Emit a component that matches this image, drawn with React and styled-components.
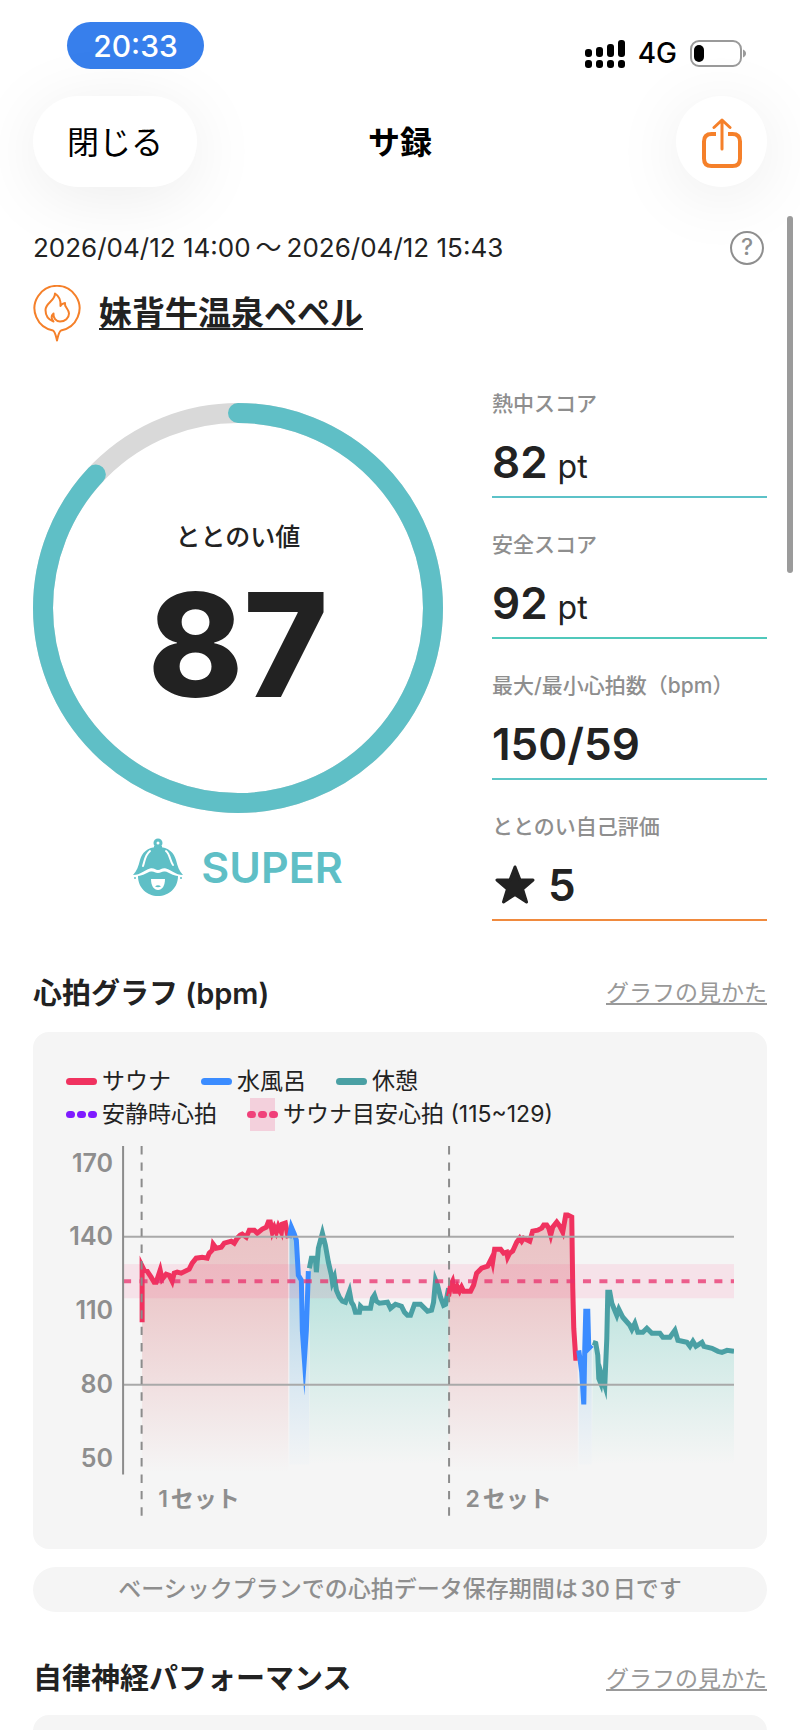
import React from "react";
import styled, { createGlobalStyle } from "styled-components";

const metrics = [
    { label: "熱中スコア", value: "82", unit: "pt", color: "#5cc2c8" },
    { label: "安全スコア", value: "92", unit: "pt", color: "#50c8bb" },
    { label: "最大/最小心拍数（bpm）", value: "150/59", color: "#5cc6c6" },
    { label: "ととのい自己評価", value: "5", star: true, color: "#f08a3e" },
];

const yLabels = [
    { text: "170", y: 32 },
    { text: "140", y: 105 },
    { text: "110", y: 179 },
    { text: "80", y: 253 },
    { text: "50", y: 327 },
];

// 心拍の折れ線 (x,y)
const sauna1 = "76,182 76,126 78,130 81,131 85,137 88,142 90,142 94,130 96,139 100,134 103,135 106,141 108,133 111,132 115,133 123,129 126,123 130,118 136,117 141,118 143,113 146,110 147,104 150,108 155,107 158,103 165,101 168,103 171,98 174,95 176,94 180,97 183,90 188,90 191,93 196,89 200,87 202,82 204,82 206,92 208,87 210,92 212,86 215,92 216,84 219,83 222,98";
const water1 = "223,98 225,87 228,94 230,100 232,135 235,140 236,190 238,219 240,190 242,131";
const rest1 = "243,128 245,118 249,118 250,132 252,108 256,93 259,105 262,122 265,135 266,142 268,137 270,150 273,157 276,161 279,162 283,151 285,162 287,165 289,172 293,172 294,166 296,168 304,168 306,158 308,155 310,161 313,163 321,162 324,168 329,164 335,166 338,172 341,175 344,175 348,164 354,164 358,168 361,171 365,170 367,162 369,140 371,145 374,157 377,165 379,164 382,148";
const sauna2 = "382,156 384,145 386,141 388,151 390,151 391,147 393,151 395,147 397,151 404,151 407,145 410,133 415,128 421,126 425,118 426,122 428,109 434,109 437,113 440,112 441,117 443,113 446,111 450,102 453,98 455,101 457,98 463,101 466,91 471,90 475,88 477,85 480,85 482,88 484,95 486,87 490,82 493,86 496,92 499,75 501,75 505,77 506,148 507,188 509,218 511,218";
const water2 = "512,210 515,232 517,264 518,208 519,171 521,171 522,208 525,205";
const rest2 = "526,202 529,203 531,215 532,238 534,243 535,235 538,245 540,198 541,152 543,152 545,163 550,175 552,169 556,177 563,185 565,189 568,183 571,192 576,192 580,188 585,193 593,193 596,197 603,197 608,190 611,200 620,202 623,206 626,201 629,206 635,202 637,206 645,208 651,211 655,212 660,210 667,211";

const series = [
    { id: "sauna", points: sauna1, from: 76, to: 222, bottom: 332, color: "#f0325f" },
    { id: "rest", points: rest1, from: 243, to: 382, bottom: 324, color: "#4aa0a4" },
    { id: "water", points: water1, from: 223, to: 243, bottom: 324, color: "#3b8cff" },
    { id: "sauna", points: sauna2, from: 382, to: 511, bottom: 332, color: "#f0325f" },
    { id: "rest", points: rest2, from: 525, to: 667, bottom: 324, color: "#4aa0a4" },
    { id: "water", points: water2, from: 512, to: 525, bottom: 324, color: "#3b8cff" },
];

const HeartChart = () => (
    <Chart viewBox="0 0 667 380" role="img" aria-label="心拍グラフ">
        <defs>
            <linearGradient id="sauna" gradientUnits="userSpaceOnUse" x1="0" y1="70" x2="0" y2="332">
                <stop offset="0" stopColor="#cf4048" stopOpacity="0.29" />
                <stop offset="0.35" stopColor="#cf4048" stopOpacity="0.23" />
                <stop offset="1" stopColor="#cf4048" stopOpacity="0" />
            </linearGradient>
            <linearGradient id="water" gradientUnits="userSpaceOnUse" x1="0" y1="88" x2="0" y2="324">
                <stop offset="0" stopColor="#4899c2" stopOpacity="0.5" />
                <stop offset="1" stopColor="#6cb8f0" stopOpacity="0.02" />
            </linearGradient>
            <linearGradient id="rest" gradientUnits="userSpaceOnUse" x1="0" y1="94" x2="0" y2="324">
                <stop offset="0" stopColor="#48bdb0" stopOpacity="0.44" />
                <stop offset="1" stopColor="#55c8b4" stopOpacity="0" />
            </linearGradient>
        </defs>

        {series.map((s, i) => (
            <polygon
                key={i}
                points={`${s.from},${s.bottom} ${s.points} ${s.to},${s.bottom}`}
                fill={`url(#${s.id})`}
            />
        ))}

        <rect x="57" y="124" width="610" height="34" fill="#ff3c82" fillOpacity="0.1" />

        {series.map((s, i) => (
            <polyline
                key={i}
                points={s.points}
                fill="none"
                stroke={s.color}
                strokeWidth="5"
                strokeMiterlimit={s.id === "water" ? 20 : 8}
            />
        ))}

        <path d="M57 141H667" stroke="#e8306c" strokeOpacity="0.75" strokeWidth="4" strokeDasharray="8 8.4" />
        <path d="M57 96.5H667M57 244.5H667" stroke="#a9a9a9" strokeWidth="2" />
        <path d="M57 6V334" stroke="#8c8c8c" strokeWidth="2" />
        <path d="M75.500 6V376M382.500 6V376" stroke="#8c8c8c" strokeWidth="2" strokeDasharray="8.400 8" />

        {yLabels.map((l) => (
            <AxisText key={l.text} x="47" y={l.y} textAnchor="end">{l.text}</AxisText>
        ))}
        <SetText x="92" y="366">1セット</SetText>
        <SetText x="399" y="366">2セット</SetText>
    </Chart>
);

const App = () => {
    return (
        <>
            <GlobalStyle />
            <Screen>
                <StatusBar>
                    <Clock>20:33</Clock>
                    <StatusIcons>
                        <svg width="40" height="28" viewBox="0 0 40 28">
                            <rect x="0" y="9" width="7" height="8" rx="3" />
                            <rect x="11" y="7" width="7" height="10" rx="3" />
                            <rect x="22" y="4" width="7" height="13" rx="3" />
                            <rect x="33" y="0" width="7" height="17" rx="3" />
                            <rect x="0" y="20" width="7" height="8" rx="3" />
                            <rect x="11" y="20" width="7" height="8" rx="3" />
                            <rect x="22" y="20" width="7" height="8" rx="3" />
                            <rect x="33" y="20" width="7" height="8" rx="3" />
                        </svg>
                        <Network>4G</Network>
                        <svg width="57" height="28" viewBox="0 0 57 28">
                            <rect x="1" y="1" width="50" height="25" rx="8" fill="none" stroke="#9a9a9a" strokeWidth="2" />
                            <rect x="4" y="5" width="10" height="17" rx="5" />
                            <path d="M53 9.500c4 1.500 4 6.500 0 8z" fill="#9a9a9a" />
                        </svg>
                    </StatusIcons>
                </StatusBar>

                <Header>
                    <Close type="button">閉じる</Close>
                    <Title>サ録</Title>
                    <Share type="button" aria-label="共有">
                        <svg width="40" height="50" viewBox="0 0 40 50" fill="none" stroke="#f5802a" strokeWidth="4" strokeLinecap="round" strokeLinejoin="round">
                            <path d="M14 16H9.500Q2 16 2 23.500V40.500Q2 48 9.500 48H30.500Q38 48 38 40.500V23.500Q38 16 30.500 16H26" strokeLinecap="butt" />
                            <path d="M20 31V2M12 9.500L20 2L28 9.500" strokeWidth="3" />
                        </svg>
                    </Share>
                </Header>

                <Content>
                    <DateRow>
                        <Period>
                            <time>2026/04/12 14:00</time>
                            <span>～</span>
                            <time>2026/04/12 15:43</time>
                        </Period>
                        <Help type="button" aria-label="ヘルプ">?</Help>
                    </DateRow>

                    <Facility>
                        <svg width="48" height="57" viewBox="0 0 48 57" fill="none" stroke="#f5802a" strokeWidth="2" strokeLinejoin="round">
                            <path d="M20 45.500A22.500 22.500 0 1 1 28 45.500C25.500 47 25 52 24 55.500C23 52 22.500 47 20 45.500Z" />
                            <path d="M20.500 36.500C15 34.500 12.500 30 12.500 25C12.500 18 22 16 22 8.500C26 11 28 15 27.500 21C28 19 30 18.500 32 18C31 22 36 24 36 28.500C36 33 32 36.500 27 36.500C23 36.500 20 33 20.500 28.500C18 30.500 18 34 20.500 36.500Z" />
                        </svg>
                        <FacilityLink href="#facility">妹背牛温泉ペペル</FacilityLink>
                    </Facility>

                    <Summary>
                        <ScoreBind>
                            <Ring>
                                <RingImage viewBox="0 0 410 410" fill="none" strokeWidth="20">
                                    <circle cx="205" cy="205" r="195" stroke="#d9d9d9" />
                                    <circle
                                        cx="205"
                                        cy="205"
                                        r="195"
                                        stroke="#5fbfc6"
                                        strokeLinecap="round"
                                        pathLength="100"
                                        strokeDasharray="87 13"
                                        transform="rotate(-90 205 205)"
                                    />
                                </RingImage>
                                <RingText>
                                    <RingLabel>ととのい値</RingLabel>
                                    <RingScore>87</RingScore>
                                </RingText>
                            </Ring>
                            <Rank>
                                <svg width="50" height="58" viewBox="0 0 50 58">
                                    <circle cx="25" cy="5" r="3" fill="none" stroke="#5fbfc6" strokeWidth="3" />
                                    <path d="M21 8H29V12H21Z" fill="#5fbfc6" />
                                    <path d="M25 9C36 9 41 15 43 22C44.500 28 46 33 50 37C42 37 39 32 33 30.500C29 29.500 28 32 25 32C22 32 21 29.500 17 30.500C11 32 8 37 0 37C4 33 5.500 28 7 22C9 15 14 9 25 9Z" fill="#5fbfc6" />
                                    <path d="M17 13C12 17 12 22 10 28M33 13C37 16 37 23 40 27" fill="none" stroke="#fff" strokeWidth="2" strokeLinecap="round" />
                                    <path d="M5 38C10 38 14 34 18 33.500C21 33 22 35 25 35C28 35 29 33 32 33.500C36 34 40 38 45 38C45 50 36 58 25 58C14 58 5 50 5 38Z" fill="#5fbfc6" />
                                    <circle cx="2" cy="40" r="1" fill="#5fbfc6" />
                                    <circle cx="48" cy="40" r="1" fill="#5fbfc6" />
                                    <path d="M18 41H32C32 48 29 52 25 52C21 52 18 48 18 41Z" fill="#fff" />
                                    <path d="M22 48.500Q25 46 28 48.500Q25 50 22 48.500Z" fill="#5fbfc6" />
                                </svg>
                                <span>SUPER</span>
                            </Rank>
                        </ScoreBind>

                        <MetricList>
                            {metrics.map((m) => (
                                <Metric key={m.label} $color={m.color}>
                                    <MetricLabel>{m.label}</MetricLabel>
                                    <MetricValue>
                                        {m.star && (
                                            <Star viewBox="0 0 40 40">
                                                <path
                                                    d="M20 2L25 15H38L27.500 24L31.500 37L20 29.500L8.500 37L12.500 24L2 15H15Z"
                                                    fill="#222"
                                                    stroke="#222"
                                                    strokeWidth="3"
                                                    strokeLinejoin="round"
                                                />
                                            </Star>
                                        )}
                                        {m.value}
                                        {m.unit && <Unit>{m.unit}</Unit>}
                                    </MetricValue>
                                </Metric>
                            ))}
                        </MetricList>
                    </Summary>

                    <SectionHead $top={51} $bottom={16}>
                        <SectionTitle>心拍グラフ (bpm)</SectionTitle>
                        <GuideLink href="#heart-guide">グラフの見かた</GuideLink>
                    </SectionHead>
                    <Card>
                        <Legend>
                            <LegendItem><Line $color="#f0325f" />サウナ</LegendItem>
                            <LegendItem><Line $color="#3b8cff" />水風呂</LegendItem>
                            <LegendItem><Line $color="#4aa0a4" />休憩</LegendItem>
                        </Legend>
                        <Legend>
                            <LegendItem>
                                <Dots $color="#7f1bff"><i /><i /><i /></Dots>安静時心拍
                            </LegendItem>
                            <LegendItem>
                                <Dots $color="#f0407a" $band><i /><i /><i /></Dots>サウナ目安心拍 (115~129)
                            </LegendItem>
                        </Legend>
                        <HeartChart />
                    </Card>
                    <Notice>ベーシックプランでの心拍データ保存期間は30日です</Notice>

                    <SectionHead $top={46} $bottom={13}>
                        <SectionTitle>自律神経パフォーマンス</SectionTitle>
                        <GuideLink href="#nerve-guide">グラフの見かた</GuideLink>
                    </SectionHead>
                    <Card $empty />
                </Content>
                <ScrollThumb />
            </Screen>
        </>
    );
};

export default App;

const GlobalStyle = createGlobalStyle`
    * {
        box-sizing: border-box;
    }

    body {
        margin: 0;
        background-color: #fff;
        color: #222;
        font-family: Inter, "Noto Sans CJK JP", sans-serif;
        line-height: 1.2;
        text-autospace: normal;
    }

    button {
        padding: 0;
        border: none;
        font-family: inherit;
        line-height: inherit;
        cursor: pointer;
    }

    svg {
        display: block;
        flex-shrink: 0;
    }
`

const Screen = styled.div`
    position: relative;
    height: 100vh;
    overflow: hidden;
`

const StatusBar = styled.div`
    display: flex;
    justify-content: space-between;
    align-items: flex-end;
    padding: 22px 53px 0 67px;
    color: #000;
`

const Clock = styled.div`
    display: flex;
    justify-content: center;
    align-items: center;
    width: 137px;
    height: 47px;
    border-radius: 24px;
    background-color: #377fec;
    color: #fff;
    font-size: 30px;
    font-weight: 500;
`

const StatusIcons = styled.div`
    display: flex;
    align-items: center;
    gap: 13px;
    height: 30px;
`

const Network = styled.span`
    font-size: 28px;
    font-weight: 500;
`

const Header = styled.header`
    display: grid;
    grid-template-columns: 1fr auto 1fr;
    align-items: center;
    margin-top: 27px;
    padding: 0 33px;
    color: #000;
`

const Close = styled.button`
    justify-self: start;
    width: 164px;
    height: 91px;
    padding-top: 3px;
    border-radius: 46px;
    background-color: #fff;
    box-shadow: 0 10px 70px rgba(0, 0, 0, 0.08);
    color: #000;
    font-size: 32px;
`

const Title = styled.h1`
    margin: 0;
    padding-top: 3px;
    font-size: 32px;
    font-weight: 600;
`

const Share = styled.button`
    display: flex;
    justify-content: center;
    align-items: center;
    justify-self: end;
    width: 91px;
    height: 91px;
    padding-top: 3px;
    border-radius: 50%;
    background-color: #fff;
    box-shadow: 0 10px 70px rgba(0, 0, 0, 0.08);
`

const Content = styled.main`
    padding: 0 33px;
`

const DateRow = styled.div`
    position: relative;
    display: flex;
    justify-content: space-between;
    align-items: center;
    height: 34px;
    margin-top: 44px;
    padding-right: 3px;
`

const Period = styled.div`
    display: flex;
    gap: 5px;
    font-size: 26px;
`

const Help = styled.button`
    width: 34px;
    height: 34px;
    border: 2px solid #8e8e8e;
    border-radius: 50%;
    background-color: transparent;
    color: #8e8e8e;
    font-size: 23px;
    font-weight: 500;
`

const Facility = styled.div`
    display: flex;
    align-items: center;
    gap: 18px;
    height: 57px;
    margin-top: 20px;
`

const FacilityLink = styled.a`
    color: #222;
    font-size: 33px;
    font-weight: 600;
    text-decoration-thickness: 2px;
    text-underline-offset: 3px;
    text-decoration-skip-ink: none;
`

const Summary = styled.section`
    display: grid;
    grid-template-columns: 410fr 275fr;
    gap: 49px;
    margin-top: 49px;
`

const ScoreBind = styled.div`
    padding-top: 12px;
`

const Ring = styled.div`
    display: grid;
    place-items: center;

    > * {
        grid-area: 1 / 1;
    }
`

const RingImage = styled.svg`
    width: 100%;
`

const RingText = styled.div`
    display: flex;
    flex-direction: column;
    align-items: center;
    padding-top: 17px;
`

const RingLabel = styled.div`
    font-size: 25px;
    font-weight: 500;
    line-height: 36px;
`

const RingScore = styled.div`
    margin-top: 20px;
    font-size: 144px;
    font-weight: 800;
    line-height: 140px;
`

const Rank = styled.div`
    display: flex;
    justify-content: center;
    align-items: center;
    gap: 18px;
    margin-top: 25px;
    color: #5fbfc6;
    font-size: 43px;
    font-weight: 600;
    line-height: 58px;
`

const MetricList = styled.div`
    display: flex;
    flex-direction: column;
    gap: 34px;
`

const Metric = styled.div`
    padding-top: 1px;
    padding-bottom: 10px;
    border-bottom: 2px solid ${(props) => props.$color};
`

const MetricLabel = styled.div`
    color: #8e8e8e;
    font-size: 21px;
    font-weight: 500;
    line-height: 24px;
    white-space: nowrap;
`

const MetricValue = styled.div`
    display: flex;
    align-items: baseline;
    height: 48px;
    margin-top: 22px;
    font-size: 44px;
    font-weight: 600;
    line-height: 48px;
`

const Star = styled.svg`
    align-self: center;
    width: 40px;
    height: 40px;
    margin: 0 13px 0 3px;
`

const Unit = styled.span`
    margin-left: 10px;
    font-size: 32px;
    font-weight: 400;
    line-height: 32px;
`

const SectionHead = styled.div`
    display: flex;
    justify-content: space-between;
    align-items: center;
    height: 44px;
    margin-top: ${(props) => props.$top}px;
    margin-bottom: ${(props) => props.$bottom}px;
`

const SectionTitle = styled.h2`
    margin: 0;
    font-size: 29px;
    font-weight: 600;
`

const GuideLink = styled.a`
    color: #999;
    font-size: 23px;
    text-decoration-thickness: 2px;
    text-underline-offset: 2px;
    text-decoration-skip-ink: none;
`

const Card = styled.section`
    min-height: ${(props) => (props.$empty ? "300px" : "0")};
    padding: 33px 33px 28px;
    border-radius: 16px;
    background-color: #f5f5f5;
`

const Legend = styled.div`
    display: flex;
    gap: 30px;
    font-size: 23px;
    line-height: 33px;
    white-space: nowrap;
`

const LegendItem = styled.div`
    display: flex;
    align-items: center;
    gap: 5px;
`

const Line = styled.span`
    width: 31px;
    height: 7px;
    border-radius: 4px;
    background-color: ${(props) => props.$color};
`

const Dots = styled.span`
    display: flex;
    justify-content: center;
    align-items: center;
    gap: 2px;
    width: 31px;
    height: 33px;
    background: ${(props) => (props.$band ? "linear-gradient(#f3d0dc, #f3d0dc) center / 25px 33px no-repeat" : "none")};

    i {
        width: 9px;
        height: 7px;
        border-radius: 4px;
        background-color: ${(props) => props.$color};
    }
`

const Chart = styled.svg`
    width: 100%;
    margin-top: 9px;
`

const AxisText = styled.text`
    fill: #8e8e8e;
    font-size: 25px;
    font-weight: 600;
`

const SetText = styled.text`
    fill: #8e8e8e;
    font-size: 23px;
    font-weight: 600;
`

const Notice = styled.p`
    margin: 18px 0 0;
    border-radius: 23px;
    background-color: #f5f5f5;
    color: #8e8e8e;
    font-size: 23px;
    font-weight: 500;
    line-height: 45px;
    text-align: center;
`

const ScrollThumb = styled.div`
    position: absolute;
    top: 216px;
    right: 7px;
    width: 6px;
    height: 357px;
    border-radius: 3px;
    background-color: #9b9b9b;
`
